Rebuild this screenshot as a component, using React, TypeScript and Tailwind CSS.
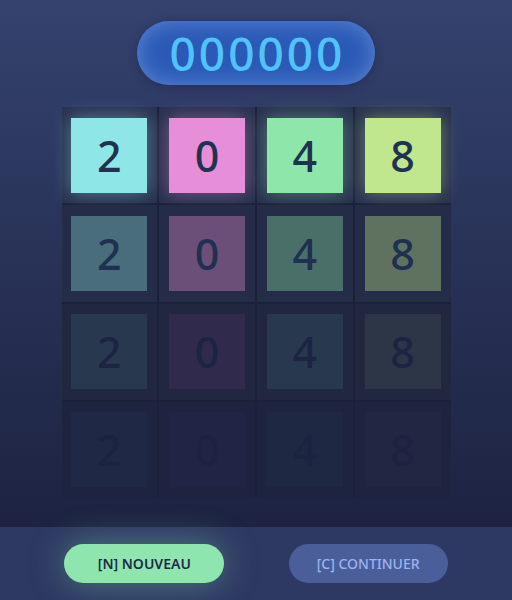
import React from 'react';

const digits = ['2', '0', '4', '8'];

// tile colours per column, faded row by row
const rows = [
  {
    cell: 'bg-[#28314f]',
    tiles: [
      'bg-[#8ee6e6] shadow-[0_0_18px_rgba(142,230,230,0.45)]',
      'bg-[#e68fd8] shadow-[0_0_18px_rgba(230,143,216,0.45)]',
      'bg-[#8ee6aa] shadow-[0_0_18px_rgba(142,230,170,0.45)]',
      'bg-[#c0e68e] shadow-[0_0_18px_rgba(192,230,142,0.45)]',
    ],
    text: 'text-[#1f3350]',
  },
  {
    cell: 'bg-[#252c48]',
    tiles: ['bg-[#4a6d7b]', 'bg-[#6b4f78]', 'bg-[#4a6e68]', 'bg-[#5e725f]'],
    text: 'text-[#1f3050]',
  },
  {
    cell: 'bg-[#20273f]',
    tiles: ['bg-[#28394f]', 'bg-[#302a4d]', 'bg-[#28394d]', 'bg-[#2c3646]'],
    text: 'text-[#1c2442]',
  },
  {
    cell: 'bg-[#1e2440]',
    tiles: ['bg-[#1f2844]', 'bg-[#212444]', 'bg-[#1f2843]', 'bg-[#212743]'],
    text: 'text-[#1c2240]',
  },
];

export default function App() {
  return (
    <div
      className="w-[512px] h-[600px] flex flex-col overflow-hidden"
      style={{ fontFamily: '"Noto Sans", "Open Sans", sans-serif' }}
    >
      <div className="flex-1 flex flex-col items-center bg-gradient-to-b from-[#34426e] to-[#1d2341] pt-[21px]">
        <div className="w-[238px] h-[64px] rounded-full bg-[#2a5ab6] shadow-[inset_0_0_22px_rgba(130,165,230,0.6),0_2px_10px_rgba(20,30,70,0.4)] flex items-center justify-center">
          <span className="text-[46px] leading-none font-medium tracking-[3px] text-[#52c2fa] pl-[3px]">
            000000
          </span>
        </div>

        <div className="mt-[22px] w-[389px] h-[391px] grid grid-cols-4 grid-rows-4 gap-[2px] bg-[#1b2139]">
          {rows.map((row, r) =>
            digits.map((d, c) => (
              <div key={`${r}-${c}`} className={`${row.cell} flex items-center justify-center`}>
                <div
                  className={`w-[76px] h-[75px] flex items-center justify-center ${row.tiles[c]} ${row.text}`}
                >
                  <span className="text-[43px] leading-none font-medium">{d}</span>
                </div>
              </div>
            ))
          )}
        </div>
      </div>

      <div className="h-[73px] bg-[#2d3863] flex items-center justify-evenly">
        <button className="w-[160px] h-[39px] rounded-full bg-[#8ee6ae] text-[#1e2a4a] text-[14px] font-semibold shadow-[0_0_36px_rgba(142,230,174,0.4)]">
          [N] NOUVEAU
        </button>
        <button className="w-[159px] h-[39px] rounded-full bg-[#4a5e9a] text-[#9db2f0] text-[14px] font-medium">
          [C] CONTINUER
        </button>
      </div>
    </div>
  );
}
